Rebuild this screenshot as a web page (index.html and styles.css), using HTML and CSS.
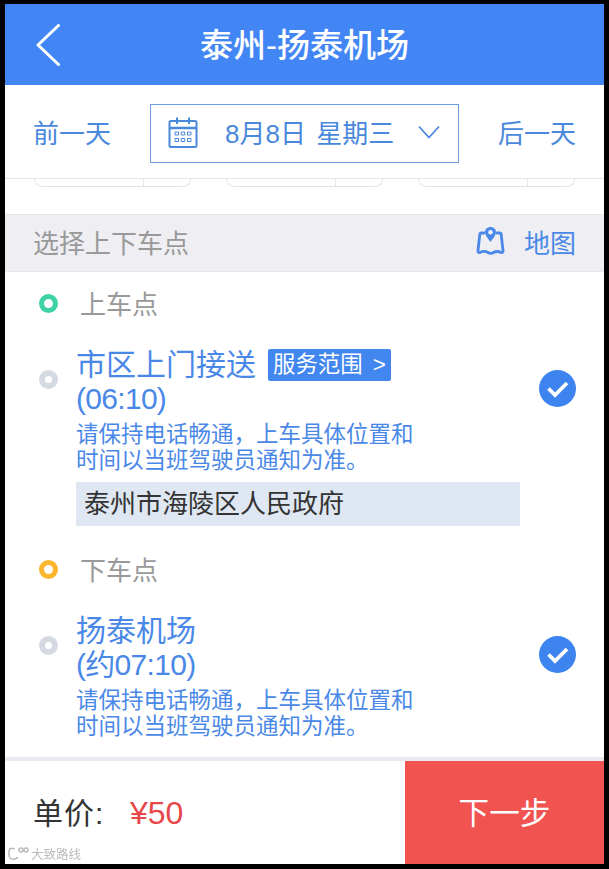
FILE: index.html
```html
<!DOCTYPE html>
<html lang="zh-CN">
<head>
    <meta charset="UTF-8">
    <title>泰州-扬泰机场</title>
    <link rel="stylesheet" href="styles.css">
</head>

<body>

    <div class="screen">

        <header class="topbar">
            <svg class="back-icon" width="24" height="42" viewBox="0 0 24 42">
                <path d="M22.5 1.5 L2 21 L22.5 40.5" fill="none" stroke="#fff" stroke-width="3" stroke-linecap="round" stroke-linejoin="round"/>
            </svg>
            <h1>泰州-扬泰机场</h1>
        </header>

        <div class="date-row">
            <span>前一天</span>
            <div class="date-box">
                <svg class="date-icon" width="30" height="31" viewBox="0 0 30 31" fill="none" stroke="#4a88dc" stroke-width="2">
                    <rect x="1.5" y="4" width="27" height="26" rx="1.5"/>
                    <path d="M1.5 11 H28.5" stroke-width="2.5"/>
                    <path d="M9 0.5 V7 M21 0.5 V7"/>
                    <path d="M7 15 h3.5 v3 h-3.5 z M13.2 15 h3.5 v3 h-3.5 z M19.5 15 h3.5 v3 h-3.5 z M7 21.5 h3.5 v3 h-3.5 z M13.2 21.5 h3.5 v3 h-3.5 z M19.5 21.5 h3.5 v3 h-3.5 z" stroke-width="1"/>
                </svg>
                <span class="date-text">8月8日 星期三</span>
                <svg class="date-arrow" width="22" height="14" viewBox="0 0 22 14">
                    <path d="M1 1.5 L11 12.5 L21 1.5" fill="none" stroke="#4a88dc" stroke-width="1.8"/>
                </svg>
            </div>
            <span>后一天</span>
        </div>

        <div class="content">

            <div class="stubs">
                <div class="stub"><i></i></div>
                <div class="stub"><i></i></div>
                <div class="stub"><i></i></div>
            </div>

            <div class="section-bar">
                <span class="section-title">选择上下车点</span>
                <div class="map-link">
                    <svg width="29" height="30" viewBox="0 0 29 30" fill="none" stroke="#4a88e8" stroke-width="2.8" stroke-linejoin="round" stroke-linecap="round">
                        <path d="M8 7 H5.5 Q4 7 3.8 8.5 L2 24.5 Q1.8 27 4 26.5 C7 25 9.5 25 12 26.5 C14 27.8 15.5 27.8 17.5 26.5 C20 25 22 25 25 26.5 Q27.2 27 27 24.5 L25.2 8.5 Q25 7 23.5 7 H21"/>
                        <path d="M14.5 1 C11 1 9 3.5 9 6 C9 9.5 12.5 13 14.5 16 C16.5 13 20 9.5 20 6 C20 3.5 18 1 14.5 1 Z" fill="#4a88e8" stroke="none"/>
                        <circle cx="14.5" cy="6.3" r="2.3" fill="#eeeef3" stroke="none"/>
                    </svg>
                    <span>地图</span>
                </div>
            </div>

            <div class="label-row">
                <span class="ring ring-green"></span>
                <span>上车点</span>
            </div>
            <div class="stop">
                <span class="ring ring-grey"></span>
                <div class="stop-body">
                    <div class="stop-name">市区上门接送 <span class="tag">服务范围 &gt;</span></div>
                    <div class="stop-name stop-time">(06:10)</div>
                    <p class="stop-note">请保持电话畅通，上车具体位置和<br>时间以当班驾驶员通知为准。</p>
                    <div class="address">泰州市海陵区人民政府</div>
                </div>
                <svg class="check" width="37" height="37" viewBox="0 0 37 37">
                    <circle cx="18.5" cy="18.5" r="18.5" fill="#3d84f0"/>
                    <path d="M9.5 18.5 L16 25 L28 13" fill="none" stroke="#fff" stroke-width="3.8"/>
                </svg>
            </div>

            <div class="label-row">
                <span class="ring ring-orange"></span>
                <span>下车点</span>
            </div>
            <div class="stop">
                <span class="ring ring-grey"></span>
                <div class="stop-body">
                    <div class="stop-name">扬泰机场</div>
                    <div class="stop-name stop-time">(约07:10)</div>
                    <p class="stop-note">请保持电话畅通，上车具体位置和<br>时间以当班驾驶员通知为准。</p>
                </div>
                <svg class="check" width="37" height="37" viewBox="0 0 37 37">
                    <circle cx="18.5" cy="18.5" r="18.5" fill="#3d84f0"/>
                    <path d="M9.5 18.5 L16 25 L28 13" fill="none" stroke="#fff" stroke-width="3.8"/>
                </svg>
            </div>

        </div>

        <footer class="bottom-bar">
            <div class="price">
                <span class="price-label">单价:</span>
                <span class="amount">¥50</span>
                <div class="watermark">
                    <svg width="23" height="14" viewBox="0 0 23 14" fill="none" stroke="#bbb" stroke-width="1.6">
                        <path d="M8 1.5 H3 C1.5 4 1.5 9 3 11 C5 13 9 12.5 11 10"/>
                        <circle cx="14" cy="3" r="2"/>
                        <circle cx="19" cy="3" r="2"/>
                    </svg>
                    <span>大致路线</span>
                </div>
            </div>
            <div class="next-btn">下一步</div>
        </footer>

    </div>

</body>
</html>
```

FILE: styles.css
```css
* {
    box-sizing: border-box;
}

body {
    margin: 0;
    background-color: #000;
    font-family: "Liberation Sans", "Noto Sans CJK SC", sans-serif;
}

.screen {
    width: 599px;
    height: 860px;
    margin: 4px 5px 5px;
    background: #fff;
    display: flex;
    flex-direction: column;
    overflow: hidden;
}

.topbar {
    height: 81px;
    flex: none;
    background-color: #4286f5;
    display: grid;
    grid-template-columns: 1fr auto 1fr;
    align-items: center;
    padding-left: 31px;
}

.topbar h1 {
    margin: 0 0 4px -31px;
    color: #fff;
    font-size: 33px;
    font-weight: 500;
    grid-column: 2;
    grid-row: 1;
}

.back-icon {
    grid-column: 1;
    grid-row: 1;
}

.date-row {
    height: 94px;
    flex: none;
    padding: 0 28px;
    display: flex;
    align-items: center;
    justify-content: space-between;
    border-bottom: 1px solid #e6e6ea;
    color: #4a88dc;
    font-size: 26px;
}

.date-box {
    width: 309px;
    height: 59px;
    margin-top: 3px;
    padding: 0 18px 4px 17px;
    display: flex;
    align-items: center;
    border: 1px solid #6c9edf;
}

.date-icon,
.date-arrow {
    margin-top: 2px;
}

.date-text {
    margin-left: 27px;
    word-spacing: 3px;
}

.date-arrow {
    margin-left: auto;
}

.content {
    flex: 1;
    overflow: hidden;
}

.stubs {
    height: 8px;
    padding: 0 29px;
    display: flex;
    justify-content: space-between;
}

.stub {
    width: 157px;
    height: 8px;
    padding-right: 46px;
    border: 1px solid #e4e4e8;
    border-top: none;
    border-radius: 0 0 9px 9px;
}

.stub i {
    display: block;
    height: 100%;
    width: 1px;
    margin-left: auto;
    background: #e4e4e8;
}

.section-bar {
    height: 58px;
    margin-top: 27px;
    padding: 0 28px 4px;
    display: flex;
    align-items: center;
    justify-content: space-between;
    background-color: #eeeef3;
    border-top: 1px solid #e6e6ea;
    border-bottom: 1px solid #e6e6ea;
    font-size: 26px;
}

.section-title {
    color: #999;
}

.map-link {
    display: flex;
    align-items: center;
    gap: 19px;
    color: #4a88e8;
}

.label-row {
    height: 44px;
    margin-top: 10px;
    padding: 0 0 4px 34px;
    display: flex;
    align-items: center;
    gap: 22px;
    color: #999;
    font-size: 26px;
}

.ring {
    flex: none;
    width: 19px;
    height: 19px;
    margin-top: 2px;
    border-radius: 50%;
    border: 5px solid #ccc;
    background: #fff;
}

.ring-green {
    border-color: #3fd2a6;
}

.ring-orange {
    border-color: #fbb62d;
}

.ring-grey {
    border-color: #d5d9e2;
    border-width: 6.5px;
    margin-top: 22px;
}

.stop {
    margin-top: 22px;
    padding-left: 34px;
    display: flex;
    align-items: flex-start;
}

.stop + .label-row {
    margin-top: 22px;
}

.stop-body {
    width: 444px;
    margin: 0 19px 0 18px;
}

.stop-name {
    height: 34px;
    line-height: 34px;
    color: #4a88e8;
    font-size: 30px;
    display: flex;
    align-items: center;
    gap: 12px;
}

.stop-time {
    letter-spacing: -0.7px;
}

.tag {
    height: 32px;
    line-height: 32px;
    padding: 0 5px;
    border-radius: 2px;
    background-color: #4286f0;
    color: #fff;
    font-size: 22.4px;
    word-spacing: 4px;
}

.stop-note {
    margin: 6px 0 0;
    color: #4a88e8;
    font-size: 22.5px;
    line-height: 26px;
}

.address {
    height: 44px;
    line-height: 44px;
    margin-top: 8px;
    padding-left: 8px;
    background-color: #dfe8f2;
    color: #333;
    font-size: 26px;
}

.check {
    flex: none;
    margin-top: 22px;
}

.bottom-bar {
    height: 107px;
    flex: none;
    display: flex;
    border-top: 4px solid #e9e9ef;
}

.price {
    flex: 1;
    position: relative;
    padding: 0 0 4px 28px;
    display: flex;
    align-items: center;
    gap: 25px;
    color: #333;
    font-size: 30px;
}

.price-label {
    width: 72px;
    letter-spacing: 1px;
}

.amount {
    margin-top: 5px;
    color: #e8474a;
    font-size: 32px;
}

.watermark {
    position: absolute;
    left: 2px;
    bottom: 1px;
    display: flex;
    align-items: center;
    gap: 1px;
    color: #bbb;
    font-size: 12.5px;
    filter: blur(0.6px);
}

.next-btn {
    width: 199px;
    padding-bottom: 4px;
    display: flex;
    align-items: center;
    justify-content: center;
    background-color: #f05350;
    color: #fff;
    font-size: 30.6px;
}
```
